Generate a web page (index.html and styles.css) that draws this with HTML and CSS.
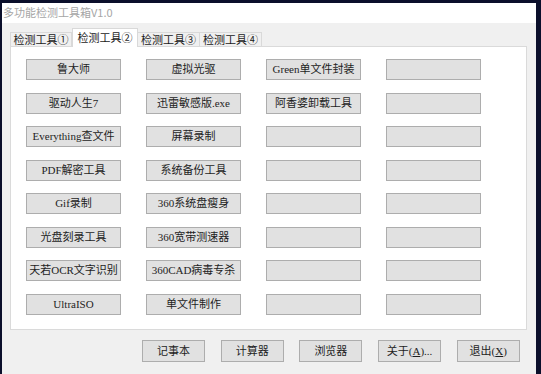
FILE: index.html
```html
<!DOCTYPE html>
<html lang="zh-CN">
<head>
<meta charset="utf-8">
<title>多功能检测工具箱V1.0</title>
<link rel="stylesheet" href="styles.css">
</head>
<body>
<div class="window">
  <div class="titlebar">多功能检测工具箱V1.0</div>
  <div class="tabs">
    <div class="tab">检测工具①</div>
    <div class="tab active">检测工具②</div>
    <div class="tab">检测工具③</div>
    <div class="tab">检测工具④</div>
  </div>
  <div class="panel">
    <div class="grid">
      <button class="btn">鲁大师</button>
      <button class="btn">虚拟光驱</button>
      <button class="btn">Green单文件封装</button>
      <button class="btn"></button>
      <button class="btn">驱动人生7</button>
      <button class="btn">迅雷敏感版.exe</button>
      <button class="btn">阿香婆卸载工具</button>
      <button class="btn"></button>
      <button class="btn">Everything查文件</button>
      <button class="btn">屏幕录制</button>
      <button class="btn"></button>
      <button class="btn"></button>
      <button class="btn">PDF解密工具</button>
      <button class="btn">系统备份工具</button>
      <button class="btn"></button>
      <button class="btn"></button>
      <button class="btn">Gif录制</button>
      <button class="btn">360系统盘瘦身</button>
      <button class="btn"></button>
      <button class="btn"></button>
      <button class="btn">光盘刻录工具</button>
      <button class="btn">360宽带测速器</button>
      <button class="btn"></button>
      <button class="btn"></button>
      <button class="btn">天若OCR文字识别</button>
      <button class="btn">360CAD病毒专杀</button>
      <button class="btn"></button>
      <button class="btn"></button>
      <button class="btn">UltraISO</button>
      <button class="btn">单文件制作</button>
      <button class="btn"></button>
      <button class="btn"></button>
    </div>
  </div>
  <div class="actions">
    <button class="btn act">记事本</button>
    <button class="btn act">计算器</button>
    <button class="btn act">浏览器</button>
    <button class="btn act">关于(<u>A</u>)...</button>
    <button class="btn act">退出(<u>X</u>)</button>
  </div>
</div>
</body>
</html>
```
FILE: styles.css
```css
html, body {
  margin: 0;
  padding: 0;
}
body {
  background: #0b0f2b;
  height: 374px;
  overflow: hidden;
  font-family: "Liberation Serif", "Noto Sans CJK SC", sans-serif;
  font-size: 11px;
}
.window {
  margin: 3px 5px 0 2px;
  height: 371px;
  background: #f0f0f0;
  display: flex;
  flex-direction: column;
}
.titlebar {
  height: 20px;
  line-height: 19px;
  background: #fff;
  color: #a6a6a6;
  padding-left: 1px;
  font-family: "Noto Sans CJK SC", sans-serif;
}
.tabs {
  display: flex;
  align-items: flex-end;
  margin: 5px 0 0 8px;
  height: 18px;
}
.tab {
  box-sizing: border-box;
  width: 62px;
  height: 14px;
  line-height: 13px;
  border: 1px solid #d9d9d9;
  border-bottom: none;
  background: #f0f0f0;
  color: #1a1a1a;
  text-align: center;
  font-family: "Noto Sans CJK SC", sans-serif;
}
.tab + .tab {
  border-left: none;
}
.tab.active {
  width: 66px;
  height: 18px;
  line-height: 16px;
  background: #fff;
  border-left: 1px solid #d9d9d9;
  border-right: 1px solid #d9d9d9;
  position: relative;
  z-index: 1;
  margin-bottom: -1px;
  height: 19px;
}
.tab.active + .tab {
  border-left: none;
}
.panel {
  box-sizing: border-box;
  margin-left: 8px;
  width: 517px;
  height: 284px;
  background: #fff;
  border: 1px solid #dadada;
  padding: 12px 0 0 15px;
}
.grid {
  display: grid;
  grid-template-columns: repeat(4, 95px);
  grid-auto-rows: 21px;
  column-gap: 25px;
  row-gap: 12.5px;
}
.btn {
  box-sizing: border-box;
  margin: 0;
  padding: 0;
  background: #e1e1e1;
  border: 1px solid #adadad;
  color: #1e1e1e;
  font-family: "Liberation Serif", "Noto Sans CJK SC", serif;
  font-size: 11px;
  white-space: nowrap;
  text-align: center;
  line-height: 17px;
}
.btn u {
  text-decoration: underline;
}
.actions {
  display: flex;
  gap: 15.7px;
  margin: 10px 0 0 140px;
}
.btn.act {
  width: 63px;
  height: 22px;
}
```
